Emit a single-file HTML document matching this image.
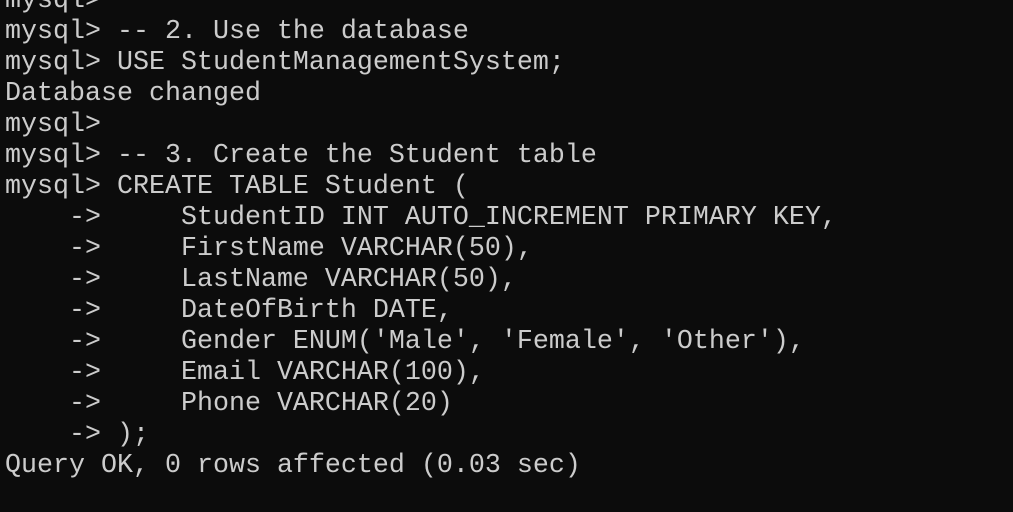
<!DOCTYPE html>
<html><head><meta charset="utf-8"><style>
html,body{margin:0;padding:0;background:#0c0c0c;width:1013px;height:512px;overflow:hidden}
pre{margin:0;position:absolute;left:5px;top:-14px;font-family:"Liberation Mono","DejaVu Sans Mono",monospace;font-size:26.67px;line-height:31px;color:#cccccc;white-space:pre}
</style></head><body><pre>mysql>
mysql> -- 2. Use the database
mysql> USE StudentManagementSystem;
Database changed
mysql>
mysql> -- 3. Create the Student table
mysql> CREATE TABLE Student (
    ->     StudentID INT AUTO_INCREMENT PRIMARY KEY,
    ->     FirstName VARCHAR(50),
    ->     LastName VARCHAR(50),
    ->     DateOfBirth DATE,
    ->     Gender ENUM('Male', 'Female', 'Other'),
    ->     Email VARCHAR(100),
    ->     Phone VARCHAR(20)
    -> );
Query OK, 0 rows affected (0.03 sec)
</pre></body></html>
